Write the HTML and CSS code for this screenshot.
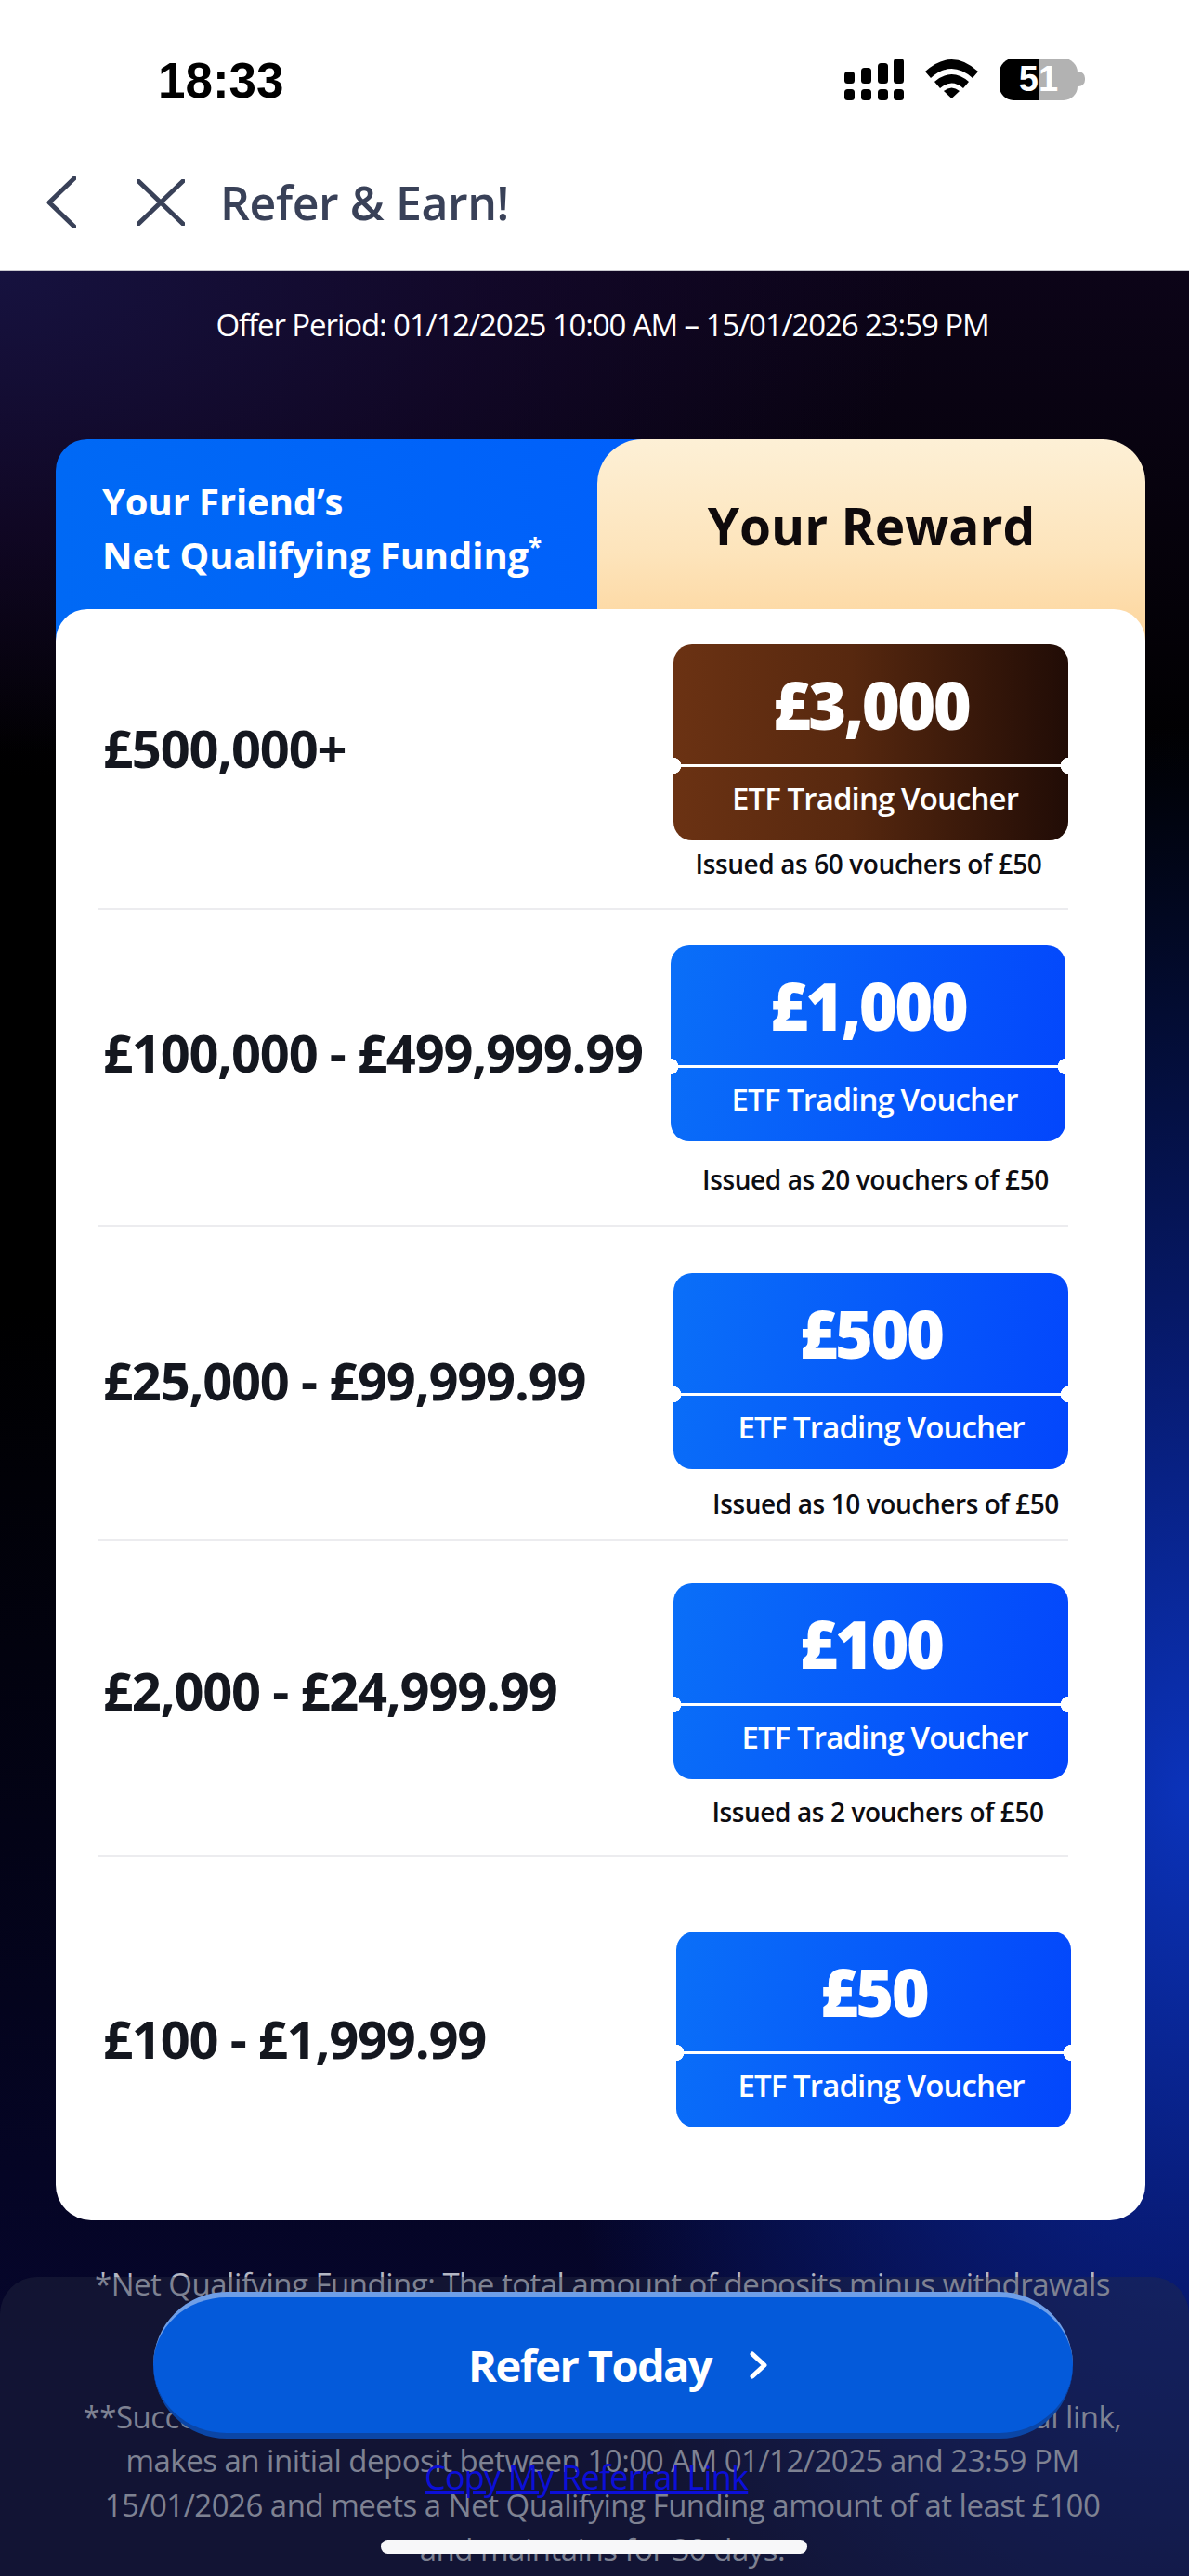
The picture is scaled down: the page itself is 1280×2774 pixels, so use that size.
FILE: index.html
```html
<!DOCTYPE html>
<html lang="en">
<head>
    <meta charset="UTF-8">
    <title>Refer &amp; Earn!</title>
    <link rel="stylesheet" href="styles.css">
</head>
<body>
    <div class="phone">
        <header class="top">
            <div class="status-bar">
                <span class="time">18:33</span>
                <div class="status-icons">
                    <svg class="signal" width="64" height="45" viewBox="0 0 64 45">
                        <rect x="0" y="14" width="11" height="13" rx="3.5"/>
                        <rect x="18" y="10" width="11" height="17" rx="3.5"/>
                        <rect x="36" y="5" width="11" height="22" rx="3.5"/>
                        <rect x="53" y="0" width="11" height="27" rx="3.5"/>
                        <rect x="0" y="33" width="11" height="12" rx="3.5"/>
                        <rect x="18" y="33" width="11" height="12" rx="3.5"/>
                        <rect x="36" y="33" width="11" height="12" rx="3.5"/>
                        <rect x="53" y="33" width="11" height="12" rx="3.5"/>
                    </svg>
                    <svg class="wifi" width="57" height="42" viewBox="0 0 57 42">
                        <path d="M0 13 Q28.5 -13 57 13 L51 20 Q28.5 0 6 20 Z"/>
                        <path d="M10 24 Q28.5 8 47 24 L41 31 Q28.5 20 16 31 Z"/>
                        <path d="M20 34 Q28.5 27 37 34 L28.5 42 Z"/>
                    </svg>
                    <div class="battery"><span>51</span></div>
                    <div class="battery-nub"></div>
                </div>
            </div>
            <nav class="nav">
                <svg class="nav-back" width="32" height="56" viewBox="0 0 32 56">
                    <path d="M30 2 L3 28 L30 54"/>
                </svg>
                <svg class="nav-close" width="52" height="50" viewBox="0 0 52 50">
                    <path d="M2 2 L50 48 M50 2 L2 48"/>
                </svg>
                <h1 class="nav-title">Refer &amp; Earn!</h1>
            </nav>
        </header>

        <main class="content">
            <p class="offer">Offer Period: 01/12/2025 10:00 AM – 15/01/2026 23:59 PM</p>

            <section class="rewards">
                <div class="tabs">
                    <div class="tab-friend">Your Friend’s<br>Net Qualifying Funding<sup>*</sup></div>
                    <div class="tab-reward">Your Reward</div>
                </div>
                <div class="tiers">
                    <div class="tier tier-1">
                        <div class="tier-label">£500,000+</div>
                        <div class="reward">
                            <div class="ticket ticket-brown">
                                <div class="ticket-amount">£3,000</div>
                                <div class="ticket-type">ETF Trading Voucher</div>
                            </div>
                            <div class="issued">Issued as 60 vouchers of £50</div>
                        </div>
                    </div>
                    <div class="tier tier-2">
                        <div class="tier-label">£100,000 - £499,999.99</div>
                        <div class="reward">
                            <div class="ticket">
                                <div class="ticket-amount">£1,000</div>
                                <div class="ticket-type">ETF Trading Voucher</div>
                            </div>
                            <div class="issued">Issued as 20 vouchers of £50</div>
                        </div>
                    </div>
                    <div class="tier tier-3">
                        <div class="tier-label">£25,000 - £99,999.99</div>
                        <div class="reward">
                            <div class="ticket">
                                <div class="ticket-amount">£500</div>
                                <div class="ticket-type">ETF Trading Voucher</div>
                            </div>
                            <div class="issued">Issued as 10 vouchers of £50</div>
                        </div>
                    </div>
                    <div class="tier tier-4">
                        <div class="tier-label">£2,000 - £24,999.99</div>
                        <div class="reward">
                            <div class="ticket">
                                <div class="ticket-amount">£100</div>
                                <div class="ticket-type">ETF Trading Voucher</div>
                            </div>
                            <div class="issued">Issued as 2 vouchers of £50</div>
                        </div>
                    </div>
                    <div class="tier tier-5">
                        <div class="tier-label">£100 - £1,999.99</div>
                        <div class="reward">
                            <div class="ticket">
                                <div class="ticket-amount">£50</div>
                                <div class="ticket-type">ETF Trading Voucher</div>
                            </div>
                        </div>
                    </div>
                </div>
            </section>

            <div class="notes">
                <p>*Net Qualifying Funding: The total amount of deposits minus withdrawals</p>
                <p>&nbsp;</p>
                <p>&nbsp;</p>
                <p>**Successful Referral: A friend who signs up using your unique referral link,</p>
                <p>makes an initial deposit between 10:00 AM 01/12/2025 and 23:59 PM</p>
                <p>15/01/2026 and meets a Net Qualifying Funding amount of at least £100</p>
                <p>and maintains for 30 days.</p>
            </div>
        </main>

        <!-- sticky footer sits over the notes -->
        <div class="sticky-panel"></div>
        <a class="refer-btn">
            <span>Refer Today</span>
            <svg width="19" height="30" viewBox="0 0 19 30"><path d="M3 3 L16 15 L3 27"/></svg>
        </a>
        <a class="copy-link" href="#">Copy My Referral Link</a>
        <div class="home-indicator"></div>
    </div>
</body>
</html>
```

FILE: styles.css
```css
* {
    box-sizing: border-box;
}

body {
    margin: 0;
    font-family: "Open Sans", "Noto Sans", sans-serif;
    background-color: #000;
}

.phone {
    position: relative;
    width: 1280px;
    height: 2774px;
    overflow: hidden;
}

/* top white area */
.top {
    height: 292px;
    background-color: #fff;
    border-bottom: 1px solid #c9c9cf;
}

.status-bar {
    height: 150px;
    display: flex;
    align-items: flex-start;
    justify-content: space-between;
    padding: 63px 112px 0 170px;
}

.time {
    font-family: "Liberation Sans", Arial, sans-serif;
    font-size: 53px;
    line-height: 48px;
    font-weight: 700;
    color: #000;
}

.status-icons {
    display: flex;
    align-items: flex-start;
}

.signal {
    margin-right: 23px;
}

.wifi {
    margin: 1px 23px 0 0;
}

.battery {
    width: 84px;
    height: 45px;
    border-radius: 15px;
    background: linear-gradient(90deg, #000 50%, #b2b2b2 50%);
    color: #fff;
    font-family: "Liberation Sans", Arial, sans-serif;
    font-size: 38px;
    font-weight: 700;
    line-height: 45px;
    text-align: center;
}

.battery-nub {
    width: 7px;
    height: 16px;
    margin: 14px 0 0 1px;
    border-radius: 0 8px 8px 0;
    background-color: #b2b2b2;
}

.nav {
    height: 141px;
    display: flex;
    align-items: center;
    padding: 0 0 6px 50px;
}

.nav svg path {
    fill: none;
    stroke: #394158;
    stroke-width: 5;
    stroke-linecap: round;
    stroke-linejoin: round;
}

.nav-close {
    margin-left: 65px;
}

.nav-title {
    margin: 0 0 0 38px;
    font-size: 50px;
    font-weight: 600;
    letter-spacing: -0.4px;
    color: #394158;
}

/* dark page */
.content {
    height: 2482px;
    padding-top: 1px;
    background:
        radial-gradient(ellipse 720px 1150px at 100% 1640px, #0b33bb 0%, rgba(9, 36, 150, 0.75) 40%, rgba(5, 15, 70, 0) 100%),
        radial-gradient(ellipse 1000px 520px at 0 0, #16123f 0%, rgba(22, 10, 50, 0.6) 55%, rgba(0, 0, 0, 0) 100%),
        linear-gradient(180deg, #0c0418 0, #000 22%, #000 45%, #06062c 90%);
}

.offer {
    margin: 0;
    padding: 35px 0 0 17px;
    height: 180px;
    text-align: center;
    font-size: 33px;
    line-height: 44px;
    letter-spacing: -1.1px;
    color: #fff;
}

.rewards {
    width: 1173px;
    margin-left: 60px;
}

.tabs {
    display: flex;
    height: 223px;
}

.tab-friend {
    flex: 0 0 633px;
    padding: 38px 0 0 50px;
    border-radius: 34px 0 0 0;
    background: linear-gradient(90deg, #0069f5, #0060fb);
    color: #fff;
    font-size: 40px;
    font-weight: 700;
    line-height: 58px;
    letter-spacing: -0.1px;
}

.tab-friend sup {
    font-size: 26px;
    line-height: 0;
}

.tab-reward {
    flex: 1;
    margin-left: -50px;
    padding-top: 56px;
    border-radius: 48px 46px 0 0;
    background: linear-gradient(180deg, #fdf0d6 0%, #fde4bb 55%, #fdd49a 100%);
    color: #0f0a0c;
    text-align: center;
    font-size: 55px;
    font-weight: 700;
    line-height: 74px;
}

.tiers {
    position: relative;
    margin-top: -40px;
    height: 1735px;
    padding: 0 83px 0 45px;
    background-color: #fff;
    border-radius: 34px 34px 38px 38px;
}

.tier {
    position: relative;
    display: flex;
    justify-content: space-between;
    border-bottom: 2px solid #ececef;
}

.tier-label {
    margin-top: 85px;
    padding-left: 6px;
    font-size: 56px;
    font-weight: 700;
    line-height: 60px;
    letter-spacing: -1.2px;
    white-space: nowrap;
    color: #14171f;
}

.reward {
    width: 425px;
}

.ticket {
    position: relative;
    height: 211px;
    border-radius: 20px;
    background: linear-gradient(100deg, #0a6ff8, #0346fc);
    color: #fff;
    text-align: center;
}

.ticket-brown {
    background: linear-gradient(90deg, #6b3213, #57280f 45%, #210c06);
}

/* perforation and the two side notches */
.ticket::before {
    content: "";
    position: absolute;
    left: 0;
    right: 0;
    top: 129px;
    height: 3px;
    background-color: #fff;
}

.ticket::after {
    content: "";
    position: absolute;
    left: -9px;
    right: -9px;
    top: 122px;
    height: 17px;
    background:
        radial-gradient(circle at 8.5px 8.5px, #fff 8.5px, transparent 9px),
        radial-gradient(circle at calc(100% - 8.5px) 8.5px, #fff 8.5px, transparent 9px);
}

.ticket-amount {
    height: 132px;
    font-size: 70px;
    font-weight: 800;
    line-height: 130px;
    letter-spacing: -2.5px;
}

.ticket-type {
    height: 79px;
    font-size: 33px;
    font-weight: 600;
    line-height: 68px;
    letter-spacing: -0.9px;
    white-space: nowrap;
}

.issued {
    font-size: 28px;
    font-weight: 600;
    line-height: 34px;
    letter-spacing: -0.4px;
    text-align: center;
    white-space: nowrap;
    color: #0d0d12;
}

/* rows in the source are not quite regular */
.tier-1 {
    height: 324px;
    padding-top: 38px;
}

.tier-1 .tier-label {
    margin-top: 81px;
}

.tier-1 .ticket-type {
    padding-left: 9px;
}

.tier-1 .issued {
    margin-top: 8px;
    padding-right: 5px;
}

.tier-2 {
    height: 341px;
    padding-top: 38px;
}

.tier-2 .reward {
    margin-right: 3px;
}

.tier-2 .ticket-type {
    padding-left: 14px;
}

.tier-2 .issued {
    margin-top: 24px;
    padding-left: 16px;
}

.tier-3 {
    height: 338px;
    padding-top: 50px;
}

.tier-3 .ticket-type {
    padding-left: 22px;
}

.tier-3 .issued {
    margin-top: 20px;
    padding-left: 32px;
}

.tier-4 {
    height: 341px;
    padding-top: 46px;
}

.tier-4 .ticket-type {
    padding-left: 30px;
}

.tier-4 .issued {
    margin-top: 18px;
    padding-left: 15px;
}

.tier-5 {
    height: 391px;
    padding-top: 80px;
    border-bottom: none;
}

.tier-5 .reward {
    margin-right: -3px;
}

.tier-5 .ticket-type {
    padding-left: 16px;
}

.notes {
    margin-top: 45px;
    padding-left: 17px;
    text-align: center;
    font-size: 33px;
    line-height: 47.6px;
    letter-spacing: -0.5px;
    white-space: nowrap;
    color: #b4b7c4;
}

.notes p {
    margin: 0;
}

/* overlays at the bottom */
.sticky-panel {
    position: absolute;
    left: 0;
    right: 0;
    top: 2452px;
    bottom: 0;
    border-radius: 40px 40px 0 0;
    background-color: rgba(40, 44, 66, 0.38);
}

.refer-btn {
    position: absolute;
    left: 165px;
    top: 2468px;
    width: 990px;
    height: 158px;
    display: flex;
    align-items: center;
    justify-content: center;
    gap: 41px;
    padding-left: 10px;
    border-radius: 79px;
    border-top: 6px solid #6f9fe8;
    border-bottom: 6px solid #0b46a6;
    background-color: #045ada;
    color: #fff;
    font-size: 47px;
    font-weight: 700;
    letter-spacing: -1.6px;
}

.refer-btn path {
    fill: none;
    stroke: #fff;
    stroke-width: 5;
    stroke-linecap: round;
    stroke-linejoin: round;
}

.copy-link {
    position: absolute;
    left: 457px;
    top: 2644px;
    font-size: 36px;
    line-height: 48px;
    letter-spacing: -0.8px;
    white-space: nowrap;
    color: #0c0fd8;
}

.home-indicator {
    position: absolute;
    left: 410px;
    top: 2735px;
    width: 459px;
    height: 15px;
    border-radius: 8px;
    background-color: #f7f7f9;
}
```
